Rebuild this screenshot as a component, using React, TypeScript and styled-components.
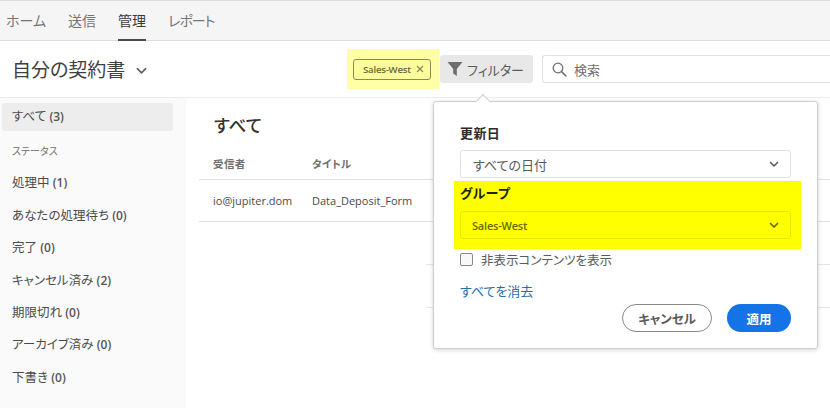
import React from "react";
import styled, { createGlobalStyle } from "styled-components";

const Global = createGlobalStyle`
  html, body { margin: 0; padding: 0; background: #fff; }
  body {
    font-family: "Open Sans", "Noto Sans CJK JP", sans-serif;
    font-feature-settings: "palt";
    color: #4b4b4b;
  }
  button { font-feature-settings: "palt"; }
  * { box-sizing: border-box; }
`;

const Page = styled.div`
  position: relative;
  width: 830px;
  height: 415px;
  overflow: hidden;
  background: #fff;
`;

const TopNav = styled.nav`
  height: 41px;
  display: flex;
  gap: 22px;
  padding: 1px 0 0 6px;
  background: #f5f5f5;
  border-top: 1px solid #dcdcdc;
  border-bottom: 1px solid #dedede;
`;

const NavTab = styled.div<{ $active?: boolean; $tight?: boolean }>`
  height: 39px;
  line-height: 38px;
  font-size: 14px;
  letter-spacing: ${(p) => (p.$tight ? "-1px" : "0")};
  color: ${(p) => (p.$active ? "#3a3a3a" : "#757575")};
  border-bottom: 2px solid ${(p) => (p.$active ? "#4b4b4b" : "transparent")};
`;

const Header = styled.header`
  height: 57px;
  display: flex;
  align-items: center;
  padding: 0 0 0 12px;
  border-bottom: 1px solid #ececec;
`;

const PageTitle = styled.h1`
  margin: 0;
  font-size: 19px;
  font-weight: 400;
  color: #404040;
`;

const TitleChevron = styled.svg`
  margin-left: 11px;
  margin-top: 3px;
`;

const HeaderTools = styled.div`
  margin-left: auto;
  display: flex;
  align-items: center;
`;

const HighlightTag = styled.div`
  width: 92px;
  height: 40px;
  padding-left: 6px;
  background: #ffffa6;
  margin-right: 1px;
  display: flex;
  align-items: center;
`;

const Tag = styled.div`
  width: 78px;
  height: 21px;
  display: flex;
  align-items: center;
  justify-content: space-between;
  padding: 0 6px 0 9px;
  font-size: 9.6px;
  font-weight: 600;
  letter-spacing: -0.2px;
  color: #6a6a3a;
  background: #fcfc9c;
  border: 1px solid #8a8a55;
  border-radius: 3px;
`;

const TagX = styled.svg`
  flex: none;
`;

const FilterButton = styled.button`
  width: 93px;
  height: 28px;
  padding: 0 0 0 7px;
  display: flex;
  align-items: center;
  gap: 4px;
  font: inherit;
  font-size: 13px;
  color: #5c5c5c;
  background: #e8e8e8;
  border: 0;
  border-radius: 3px;
`;

const SearchBox = styled.div`
  width: 288px;
  height: 28px;
  margin-left: 9px;
  display: flex;
  align-items: center;
  gap: 7px;
  padding-left: 9px;
  font-size: 13px;
  color: #707070;
  background: #fff;
  border: 1px solid #e1e1e1;
  border-right: 0;
  border-radius: 3px 0 0 3px;
`;

const Body = styled.div`
  display: flex;
`;

const Sidebar = styled.aside`
  width: 186px;
  height: 310px;
  padding: 5px 13px 0 2px;
  background: #fafafa;
`;

const SideItem = styled.div<{ $selected?: boolean }>`
  height: 28px;
  padding-left: 10px;
  line-height: 27px;
  font-size: 12.5px;
  color: #4b4b4b;
  border-radius: 3px;
  background: ${(p) => (p.$selected ? "#ededed" : "transparent")};
  margin-bottom: 4.4px;
  white-space: nowrap;
`;

const Count = styled.b`
  font-weight: 600;
  font-size: 12px;
  color: #555;
`;

const SideHeading = styled.div`
  height: 34px;
  padding: 7px 0 0 10px;
  font-size: 10px;
  line-height: 18px;
  color: #707070;
`;

const Main = styled.main`
  flex: 1;
  padding: 16px 0 0 13px;
`;

const MainTitle = styled.h2`
  margin: 0;
  padding-left: 15px;
  height: 38px;
  font-size: 17.5px;
  line-height: 23px;
  font-weight: 500;
  color: #333;
`;

const TableRow = styled.div<{ $head?: boolean }>`
  display: grid;
  grid-template-columns: 99px 1fr;
  align-items: center;
  width: 631px;
  padding: 0 0 ${(p) => (p.$head ? "5px" : "0")} 14px;
  height: ${(p) => (p.$head ? "28px" : "42px")};
  font-size: ${(p) => (p.$head ? "10.5px" : "11px")};
  font-weight: ${(p) => (p.$head ? 600 : 400)};
  letter-spacing: ${(p) => (p.$head ? "0.4px" : "0")};
  color: ${(p) => (p.$head ? "#6e6e6e" : "#4b4b4b")};
  border-bottom: 1px solid #e0e0e0;
`;

const GhostRow = styled.div`
  width: 631px;
  height: 43px;
  background: linear-gradient(90deg, transparent 227px, #e4e4e4 227px) bottom / 100% 1px no-repeat;
`;

const Popover = styled.div`
  position: absolute;
  left: 433px;
  top: 101px;
  width: 385px;
  height: 248px;
  padding: 23px 26px 0 26px;
  background: #fff;
  border: 1px solid #cfcfcf;
  border-radius: 3px;
  box-shadow: 0 1px 4px rgba(0, 0, 0, 0.18);
`;

const PopoverArrow = styled.div`
  position: absolute;
  left: 44px;
  top: -6px;
  width: 10px;
  height: 10px;
  background: #fff;
  border-left: 1px solid #cfcfcf;
  border-top: 1px solid #cfcfcf;
  transform: rotate(45deg);
`;

const FieldLabel = styled.div`
  height: 25px;
  font-size: 13px;
  line-height: 17px;
  font-weight: 700;
  letter-spacing: 0.4px;
  color: #2c2c2c;
`;

const Select = styled.div<{ $highlight?: boolean }>`
  height: 28px;
  padding: 0 10px 0 ${(p) => (p.$highlight ? "11px" : "12px")};
  display: flex;
  align-items: center;
  justify-content: space-between;
  font-size: ${(p) => (p.$highlight ? "11px" : "13px")};
  font-weight: ${(p) => (p.$highlight ? 600 : 400)};
  letter-spacing: ${(p) => (p.$highlight ? "-0.2px" : "0")};
  color: ${(p) => (p.$highlight ? "#6a6a00" : "#5a5a5a")};
  background: ${(p) => (p.$highlight ? "#ffff00" : "#fff")};
  border: 1px solid ${(p) => (p.$highlight ? "#e6e600" : "#e1e1e1")};
  border-radius: 3px;
`;

const HighlightBand = styled.div`
  margin: 3px 0 0 -6px;
  width: 347px;
  height: 68px;
  padding: 4px 10px 0 6px;
  background: #ffff00;
`;

const GroupLabel = styled(FieldLabel)`
  height: 26px;
  color: #222200;
`;

const CheckRow = styled.label`
  margin-top: -1px;
  height: 22px;
  display: flex;
  align-items: center;
  gap: 8px;
  font-size: 12.5px;
  color: #5a5a5a;
`;

const CheckBox = styled.span`
  width: 13px;
  height: 13px;
  background: #f8f8f8;
  border: 1.5px solid #8a8a8a;
  border-radius: 2px;
`;

const ClearLink = styled.a`
  display: block;
  margin-top: 12px;
  height: 18px;
  font-size: 13px;
  line-height: 18px;
  color: #1f6fb0;
`;

const Actions = styled.div`
  margin-top: 4px;
  display: flex;
  justify-content: flex-end;
  gap: 15px;
`;

const PillButton = styled.button<{ $primary?: boolean }>`
  height: 28px;
  width: ${(p) => (p.$primary ? "64px" : "90px")};
  padding: 0;
  font: inherit;
  font-size: 12.5px;
  font-weight: 600;
  color: ${(p) => (p.$primary ? "#fff" : "#5a5a5a")};
  background: ${(p) => (p.$primary ? "#1473e6" : "#fff")};
  border: ${(p) => (p.$primary ? "0" : "1.5px solid #8a8a8a")};
  border-radius: 14px;
`;

const Chevron = ({ size = 12, color = "#5f5f5f" }: { size?: number; color?: string }) => (
  <svg width={size} height={size} viewBox="0 0 12 12" fill="none">
    <path d="M2.5 4.5 6 8l3.5-3.5" stroke={color} strokeWidth="1.7" strokeLinecap="round" strokeLinejoin="round" />
  </svg>
);

const statuses: [string, number][] = [
  ["処理中", 1],
  ["あなたの処理待ち", 0],
  ["完了", 0],
  ["キャンセル済み", 2],
  ["期限切れ", 0],
  ["アーカイブ済み", 0],
  ["下書き", 0],
];

export default function App() {
  return (
    <Page>
      <Global />
      <TopNav>
        <NavTab>ホーム</NavTab>
        <NavTab>送信</NavTab>
        <NavTab $active>管理</NavTab>
        <NavTab $tight>レポート</NavTab>
      </TopNav>
      <Header>
        <PageTitle>自分の契約書</PageTitle>
        <TitleChevron width="11" height="11" viewBox="0 0 12 12" fill="none">
          <path d="M1.5 4 6 8.5 10.5 4" stroke="#5f5f5f" strokeWidth="1.8" strokeLinecap="round" strokeLinejoin="round" />
        </TitleChevron>
        <HeaderTools>
          <HighlightTag>
            <Tag>
              Sales-West
              <TagX width="8" height="8" viewBox="0 0 8 8" fill="none">
                <path d="M1 1l6 6M7 1 1 7" stroke="#85855a" strokeWidth="1.1" />
              </TagX>
            </Tag>
          </HighlightTag>
          <FilterButton>
            <svg width="16" height="16" viewBox="0 0 15 15">
              <path d="M.5 1h14L9.2 7.6V14L5.8 11.8V7.6z" fill="#6e6e6e" />
            </svg>
            フィルター
          </FilterButton>
          <SearchBox>
            <svg width="15" height="15" viewBox="0 0 15 15" fill="none">
              <circle cx="6" cy="6" r="4.8" stroke="#6e6e6e" strokeWidth="1.3" />
              <path d="m9.6 9.6 4.4 4.4" stroke="#6e6e6e" strokeWidth="1.5" strokeLinecap="round" />
            </svg>
            検索
          </SearchBox>
        </HeaderTools>
      </Header>
      <Body>
        <Sidebar>
          <SideItem $selected>
            すべて <Count>(3)</Count>
          </SideItem>
          <SideHeading>ステータス</SideHeading>
          {statuses.map(([label, n]) => (
            <SideItem key={label}>
              {label} <Count>({n})</Count>
            </SideItem>
          ))}
        </Sidebar>
        <Main>
          <MainTitle>すべて</MainTitle>
          <TableRow $head>
            <span>受信者</span>
            <span>タイトル</span>
          </TableRow>
          <TableRow>
            <span>io@jupiter.dom</span>
            <span>Data_Deposit_Form</span>
          </TableRow>
          <GhostRow />
          <GhostRow />
        </Main>
      </Body>
      <Popover>
        <PopoverArrow />
        <FieldLabel>更新日</FieldLabel>
        <Select>
          すべての日付
          <Chevron />
        </Select>
        <HighlightBand>
          <GroupLabel>グループ</GroupLabel>
          <Select $highlight>
            Sales-West
            <Chevron color="#6a6a00" />
          </Select>
        </HighlightBand>
        <CheckRow>
          <CheckBox />
          非表示コンテンツを表示
        </CheckRow>
        <ClearLink>すべてを消去</ClearLink>
        <Actions>
          <PillButton>キャンセル</PillButton>
          <PillButton $primary>適用</PillButton>
        </Actions>
      </Popover>
    </Page>
  );
}
